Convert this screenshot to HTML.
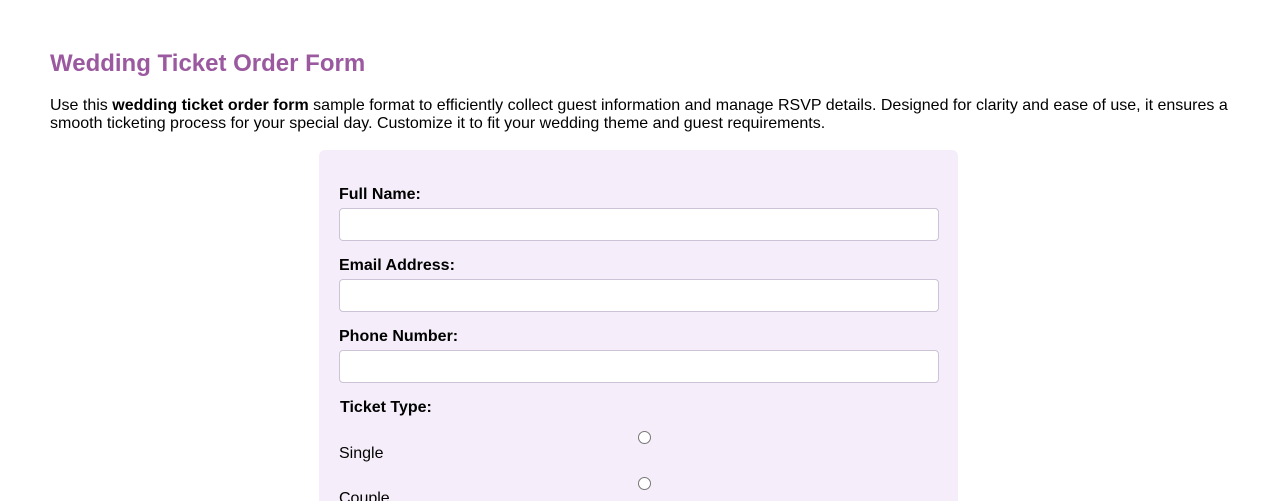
<!DOCTYPE html>
<html><head><style>
html,body{margin:0;background:#fff;font-family:"Liberation Sans",Arial,sans-serif;color:#000;width:1278px;height:501px;overflow:hidden;position:relative}
h1{position:absolute;left:50px;top:50px;margin:0;font-size:24px;color:#9b59a0;font-weight:bold;line-height:28px}
p{position:absolute;left:50px;top:97px;margin:0;font-size:16px;line-height:18px;width:1190px}
.form{position:absolute;left:319px;top:150px;width:639px;height:400px;background:#f5eefa;border-radius:6px}
.lbl{position:absolute;left:20px;font-weight:bold;font-size:16px}
.in{position:absolute;left:20px;width:598px;height:31px;background:#fff;border:1px solid #ccc3d6;border-radius:4px}
.r{position:absolute;left:319px;width:11px;height:11px;border:1px solid #777;border-radius:50%;background:#fff}
.t{position:absolute;left:20px;font-size:16px}
</style></head><body>
<h1>Wedding Ticket Order Form</h1>
<p>Use this <b>wedding ticket order form</b> sample format to efficiently collect guest information and manage RSVP details. Designed for clarity and ease of use, it ensures a smooth ticketing process for your special day. Customize it to fit your wedding theme and guest requirements.</p>
<div class="form">
<div class="lbl" style="top:36px">Full Name:</div>
<div class="in" style="top:58px"></div>
<div class="lbl" style="top:107px">Email Address:</div>
<div class="in" style="top:129px"></div>
<div class="lbl" style="top:178px">Phone Number:</div>
<div class="in" style="top:200px"></div>
<div class="lbl" style="top:249px;left:21px">Ticket Type:</div>
<div class="r" style="top:281px"></div>
<div class="t" style="top:295px">Single</div>
<div class="r" style="top:327px"></div>
<div class="t" style="top:340px">Couple</div>
</div>
</body></html>
